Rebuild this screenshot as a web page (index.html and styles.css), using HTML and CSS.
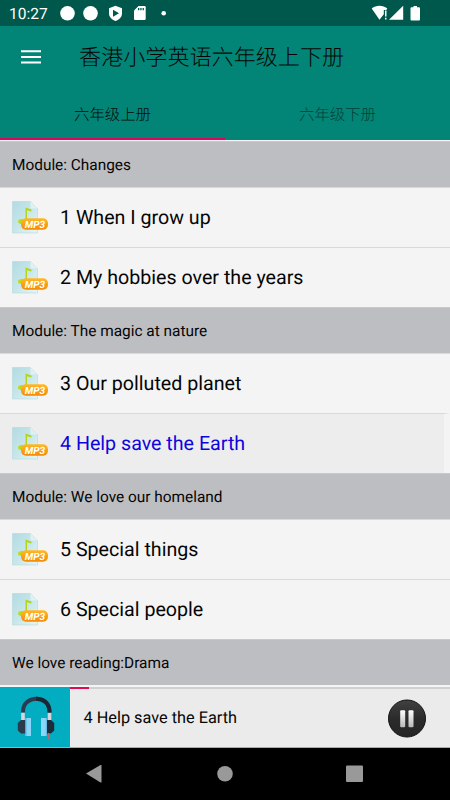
FILE: index.html
```html
<!DOCTYPE html>
<html lang="zh-CN">
<head>
<meta charset="utf-8">
<title>香港小学英语六年级上下册</title>
<link rel="stylesheet" href="styles.css">
</head>
<body>
<svg class="defs" width="0" height="0" aria-hidden="true">
  <defs>
    <linearGradient id="paper" x1="0" y1="0" x2="1" y2="1"><stop offset="0" stop-color="#b1dbe2"/><stop offset=".5" stop-color="#c7e6ea"/><stop offset="1" stop-color="#e7f5f4"/></linearGradient>
    <linearGradient id="orange" x1="0" y1="0" x2="0" y2="1"><stop offset="0" stop-color="#ffba25"/><stop offset="1" stop-color="#f58a06"/></linearGradient>
    <linearGradient id="dark" x1="0" y1="0" x2="0" y2="1"><stop offset="0" stop-color="#414141"/><stop offset=".5" stop-color="#2b2b2b"/><stop offset="1" stop-color="#252525"/></linearGradient>
    <linearGradient id="bar" x1="0" y1="0" x2="0" y2="1"><stop offset="0" stop-color="#fff"/><stop offset="1" stop-color="#b8b8b8"/></linearGradient>
    <symbol id="mp3" viewBox="0 0 36 33">
      <path d="M.5.5h18l7 7v24.500H.5z" fill="url(#paper)" stroke="#b9dbe0" stroke-width=".7"/>
      <path d="M18.500.5l7 7h-7z" fill="#dff2f3"/>
      <path d="M13.500 18V6.500l6 2v2l-4.500-1.200V19z" fill="#b4d51b"/>
      <ellipse cx="10" cy="20.500" rx="4" ry="2.500" fill="#b9dc13"/>
      <rect x="9" y="17.200" width="27" height="11.500" rx="5" fill="url(#orange)"/>
      <text x="22.800" y="26.500" text-anchor="middle" class="mp3-label">MP3</text>
    </symbol>
  </defs>
</svg>
<div class="screen">
  <div class="status">
    <span class="clock">10:27</span>
    <svg class="notices" width="110" height="26" viewBox="0 0 110 26" fill="#fff">
      <circle cx="7.500" cy="13.300" r="7.300"/><circle cx="30.500" cy="13.300" r="7.300"/>
      <path d="M55.500 5.700l6.500 2.500v5c0 3.800-2.700 6.500-6.500 7.900-3.800-1.400-6.500-4.100-6.500-7.900v-5z"/><path d="M53 9.800l6 3.500-6 3.500z" fill="#00574b"/>
      <path d="M78.500 6h6q1.200 0 1.200 1.200v11.600q0 1.200-1.200 1.200h-9.300q-1.200 0-1.200-1.200v-8.300z"/><path d="M78 8h1.300v2.300H78zm2.300 0h1.300v2.300h-1.300zm2.300 0h1.300v2.300h-1.300z" fill="#00574b"/>
      <circle cx="103.700" cy="13.200" r="2.300"/>
    </svg>
    <svg class="system" width="72" height="26" viewBox="0 0 72 26" fill="#fff">
      <path d="M.7 8.500C5 4.900 12 4.900 16.300 8.500l-1 1.500h-2.500v4.200L8.500 19.700z"/>
      <path d="M14 10.500h1.500v6H14zm0 7.300h1.500v1.800H14zM18 19.700H32.200V5.800z"/>
      <path d="M42.500 6H46v1.300h2q1 0 1 1v11.200q0 1-1 1h-7.500q-1 0-1-1V8.300q0-1 1-1h2z"/>
    </svg>
  </div>
  <header class="appbar">
    <div class="toolbar">
      <svg class="menu" width="21" height="14" viewBox="0 0 21 14"><path d="M0 1.200h20M0 6.900h20M0 12.600h20" stroke="#fff" stroke-width="2"/></svg>
      <h1 class="title">香港小学英语六年级上下册</h1>
    </div>
    <nav class="tabs"><div class="tab active">六年级上册</div><div class="tab">六年级下册</div></nav>
  </header>
  <main class="list">
    <h2 class="module">Module: Changes</h2>
    <div class="track"><svg class="icon"><use href="#mp3"/></svg><span class="name">1 When I grow up</span></div>
    <div class="track"><svg class="icon"><use href="#mp3"/></svg><span class="name">2 My hobbies over the years</span></div>
    <h2 class="module">Module: The magic at nature</h2>
    <div class="track"><svg class="icon"><use href="#mp3"/></svg><span class="name">3 Our polluted planet</span></div>
    <div class="track playing"><svg class="icon"><use href="#mp3"/></svg><span class="name">4 Help save the Earth</span></div>
    <h2 class="module">Module: We love our homeland</h2>
    <div class="track"><svg class="icon"><use href="#mp3"/></svg><span class="name">5 Special things</span></div>
    <div class="track"><svg class="icon"><use href="#mp3"/></svg><span class="name">6 Special people</span></div>
    <h2 class="module">We love reading:Drama</h2>
  </main>
  <footer class="player">
    <div class="cover">
      <svg width="70" height="60" viewBox="0 -1 70 60">
        <path d="M23 24.500V32M49.500 24.500V32" stroke="#d5d7dc" stroke-width="3.600"/>
        <path d="M23 24.500v-1C23 6.500 49.500 6.500 49.500 23.500v1" fill="none" stroke="#2b3b4e" stroke-width="4"/>
        <path d="M36 10.700C44 10.700 49.500 15.500 49.500 24.500" fill="none" stroke="#1b2735" stroke-width="4"/>
        <path d="M26 32h-5l-3.200 3v7.500l3.200 3h5z" fill="#2b3b4e"/><path d="M46 32h5l3.200 3v7.500l-3.200 3h-5z" fill="#1e2b3b"/>
        <path d="M48.700 45v6" stroke="#b36b6e" stroke-width="1.600"/>
        <path d="M25.500 30H31v18h-5.500zM41 30h6v18h-6z" fill="#8bd5f8"/><path d="M25.500 30h1.200v18h-1.200zM45.800 30H47v18h-1.200z" fill="#64bce5"/>
      </svg>
    </div>
    <div class="controls">
      <div class="progress"><div class="elapsed"></div></div>
      <span class="now">4 Help save the Earth</span>
      <svg class="pause" width="40" height="40" viewBox="0 0 40 40"><circle cx="20" cy="20.500" r="18.500" fill="url(#dark)" stroke="#111" stroke-width="1"/><rect x="13.200" y="12.300" width="5" height="17" rx="1" fill="url(#bar)"/><rect x="21.500" y="12.300" width="5" height="17" rx="1" fill="url(#bar)"/></svg>
    </div>
  </footer>
  <div class="navbar">
    <svg width="18" height="20" viewBox="0 0 18 20"><path d="M1 9.500L15.500 1q1-.4 1 .5v16.500q0 .9-1 .4z" fill="#999"/></svg>
    <svg width="18" height="20" viewBox="0 0 18 20"><circle cx="10" cy="9.700" r="7.800" fill="#999"/></svg>
    <svg width="18" height="20" viewBox="0 0 18 20"><rect x="1" y="1.500" width="17" height="16.500" rx="1" fill="#999"/></svg>
  </div>
</div>
</body>
</html>
```
FILE: styles.css
```css
* { box-sizing: border-box; }
body { margin: 0; font-family: Roboto, "Noto Sans CJK SC", sans-serif; color: #050505; text-rendering: geometricPrecision; }
svg { display: block; flex: none; }
.defs { position: absolute; }
.screen { display: flex; flex-direction: column; width: 450px; height: 800px; overflow: hidden; background: #f4f4f4; }
.status { display: flex; align-items: center; height: 26px; padding: 0 8px; background: #00574b; color: #fff; }
.clock { width: 52px; padding: 2px 0 0 1px; font-size: 15.5px; line-height: 26px; }
.system { margin-left: auto; margin-right: -1px; }
.appbar { height: 114px; background: #028576; }
.toolbar { display: flex; align-items: center; height: 62px; padding-left: 21px; }
.menu { margin-left: -0.5px; }
.title { margin: 2px 0 0 37.5px; font-size: 22.1px; line-height: 30px; font-weight: 300; }
.tabs { display: flex; height: 52px; }
.tab { flex: 1; padding-top: 1px; line-height: 52px; height: 52px; overflow: hidden; text-align: center; font-size: 15.4px; font-weight: 300; color: #033e37; }
.tab.active { color: #020807; border-bottom: 2px solid #d9045d; }
.list { height: 547px; padding-top: 1px; background: #f4f4f4; }
.module { height: 46px; margin: 0; padding: 1px 0 0 12px; border-top: 1px solid #c8c9cb; background: #bdbec2; font-size: 15.4px; line-height: 45px; font-weight: 400; }
.track { display: flex; align-items: center; height: 60px; padding-left: 12px; border-top: 1px solid #d9d9d9; }
.icon { width: 36px; height: 33px; }
.name { margin-left: 12px; padding-top: 1px; font-size: 19.65px; line-height: 58px; white-space: nowrap; }
.playing { background: #ededed; border-right: 6px solid #f4f4f4; }
.playing .name { color: #0d05dd; }
.mp3-label { font: italic 700 10px Roboto, sans-serif; fill: #fff; }
.player { display: flex; height: 61px; border-bottom: 1px solid #aaa; background: #ebebeb; }
.cover { width: 70px; background: #02adc1; }
.controls { position: relative; flex: 1; display: flex; align-items: center; justify-content: space-between; padding: 2px 23px 0 13.5px; }
.progress { position: absolute; top: 0; left: 0; width: 100%; height: 2px; background: #d0d0d0; }
.elapsed { width: 19px; height: 2px; background: #df0b51; }
.now { padding-bottom: 1px; font-size: 16.3px; line-height: 58px; }
.navbar { display: flex; justify-content: space-between; flex: 1; padding: 16px 87px 0 85px; background: #000; }
```
